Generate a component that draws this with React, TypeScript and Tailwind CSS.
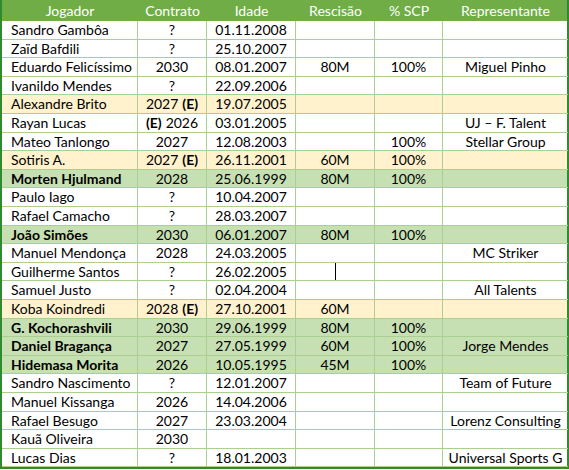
type Tone = "plain" | "loan" | "first";

interface Row {
  name: string;
  contract: string;
  loan?: "after" | "before";
  born: string;
  release: string;
  scp: string;
  agent: string;
  tone: Tone;
  h: string;
  caret?: boolean;
}

const rows: Row[] = [
  { name: "Sandro Gambôa", contract: "?", born: "01.11.2008", release: "", scp: "", agent: "", tone: "plain", h: "h-[19px]" },
  { name: "Zaïd Bafdili", contract: "?", born: "25.10.2007", release: "", scp: "", agent: "", tone: "plain", h: "h-[18px]" },
  { name: "Eduardo Felicíssimo", contract: "2030", born: "08.01.2007", release: "80M", scp: "100%", agent: "Miguel Pinho", tone: "plain", h: "h-[19px]" },
  { name: "Ivanildo Mendes", contract: "?", born: "22.09.2006", release: "", scp: "", agent: "", tone: "plain", h: "h-[18px]" },
  { name: "Alexandre Brito", contract: "2027", loan: "after", born: "19.07.2005", release: "", scp: "", agent: "", tone: "loan", h: "h-[19px]" },
  { name: "Rayan Lucas", contract: "2026", loan: "before", born: "03.01.2005", release: "", scp: "", agent: "UJ – F. Talent", tone: "plain", h: "h-[19px]" },
  { name: "Mateo Tanlongo", contract: "2027", born: "12.08.2003", release: "", scp: "100%", agent: "Stellar Group", tone: "plain", h: "h-[18px]" },
  { name: "Sotiris A.", contract: "2027", loan: "after", born: "26.11.2001", release: "60M", scp: "100%", agent: "", tone: "loan", h: "h-[19px]" },
  { name: "Morten Hjulmand", contract: "2028", born: "25.06.1999", release: "80M", scp: "100%", agent: "", tone: "first", h: "h-[18px]" },
  { name: "Paulo Iago", contract: "?", born: "10.04.2007", release: "", scp: "", agent: "", tone: "plain", h: "h-[19px]" },
  { name: "Rafael Camacho", contract: "?", born: "28.03.2007", release: "", scp: "", agent: "", tone: "plain", h: "h-[19px]" },
  { name: "João Simões", contract: "2030", born: "06.01.2007", release: "80M", scp: "100%", agent: "", tone: "first", h: "h-[18px]" },
  { name: "Manuel Mendonça", contract: "2028", born: "24.03.2005", release: "", scp: "", agent: "MC Striker", tone: "plain", h: "h-[19px]" },
  { name: "Guilherme Santos", contract: "?", born: "26.02.2005", release: "", scp: "", agent: "", tone: "plain", h: "h-[18px]", caret: true },
  { name: "Samuel Justo", contract: "?", born: "02.04.2004", release: "", scp: "", agent: "All Talents", tone: "plain", h: "h-[19px]" },
  { name: "Koba Koindredi", contract: "2028", loan: "after", born: "27.10.2001", release: "60M", scp: "", agent: "", tone: "loan", h: "h-[19px]" },
  { name: "G. Kochorashvili", contract: "2030", born: "29.06.1999", release: "80M", scp: "100%", agent: "", tone: "first", h: "h-[18px]" },
  { name: "Daniel Bragança", contract: "2027", born: "27.05.1999", release: "60M", scp: "100%", agent: "Jorge Mendes", tone: "first", h: "h-[19px]" },
  { name: "Hidemasa Morita", contract: "2026", born: "10.05.1995", release: "45M", scp: "100%", agent: "", tone: "first", h: "h-[18px]" },
  { name: "Sandro Nascimento", contract: "?", born: "12.01.2007", release: "", scp: "", agent: "Team of Future", tone: "plain", h: "h-[19px]" },
  { name: "Manuel Kissanga", contract: "2026", born: "14.04.2006", release: "", scp: "", agent: "", tone: "plain", h: "h-[19px]" },
  { name: "Rafael Besugo", contract: "2027", born: "23.03.2004", release: "", scp: "", agent: "Lorenz Consulting", tone: "plain", h: "h-[18px]" },
  { name: "Kauã Oliveira", contract: "2030", born: "", release: "", scp: "", agent: "", tone: "plain", h: "h-[19px]" },
  { name: "Lucas Dias", contract: "?", born: "18.01.2003", release: "", scp: "", agent: "Universal Sports G", tone: "plain", h: "h-[18px]" },
];

const toneBg: Record<Tone, string> = {
  plain: "bg-white",
  loan: "bg-[#fff2cc]",
  first: "bg-[#c6e0b4]",
};

const cell = "flex items-center justify-center border-b border-r border-[#a9d08e] overflow-hidden whitespace-nowrap";

export default function App() {
  return (
    <div className="w-[569px] h-[470px] bg-white text-black text-[14px] leading-none" style={{ fontFamily: "Lato, 'Noto Sans', sans-serif" }}>
      <div className="border-x-2 border-b-2 border-[#2e8b2e]">
        {/* Header */}
        <div className="grid grid-cols-[136px_69px_89px_79px_68px_125px] h-[21px] bg-[#70ad47] text-white">
          <div className="flex items-center justify-center">Jogador</div>
          <div className="flex items-center justify-center">Contrato</div>
          <div className="flex items-center justify-center">Idade</div>
          <div className="flex items-center justify-center">Rescisão</div>
          <div className="flex items-center justify-center">% SCP</div>
          <div className="flex items-center justify-center">Representante</div>
        </div>

        {rows.map((r) => (
          <div
            key={r.name}
            className={`grid grid-cols-[136px_69px_89px_79px_68px_125px] ${r.h} ${toneBg[r.tone]}`}
          >
            <div className={`${cell} justify-start pl-[9px] ${r.tone === "first" ? "font-bold" : ""}`}>
              {r.name}
            </div>
            <div className={cell}>
              {r.loan === "before" && <span className="font-bold mr-1">(E)</span>}
              {r.contract}
              {r.loan === "after" && <span className="font-bold ml-1">(E)</span>}
            </div>
            <div className={cell}>{r.born}</div>
            <div className={cell}>
              {r.caret ? <span className="inline-block w-px h-[17px] bg-black" /> : r.release}
            </div>
            <div className={cell}>{r.scp}</div>
            <div className={`${cell} border-r-0`}>{r.agent}</div>
          </div>
        ))}
      </div>
    </div>
  );
}
